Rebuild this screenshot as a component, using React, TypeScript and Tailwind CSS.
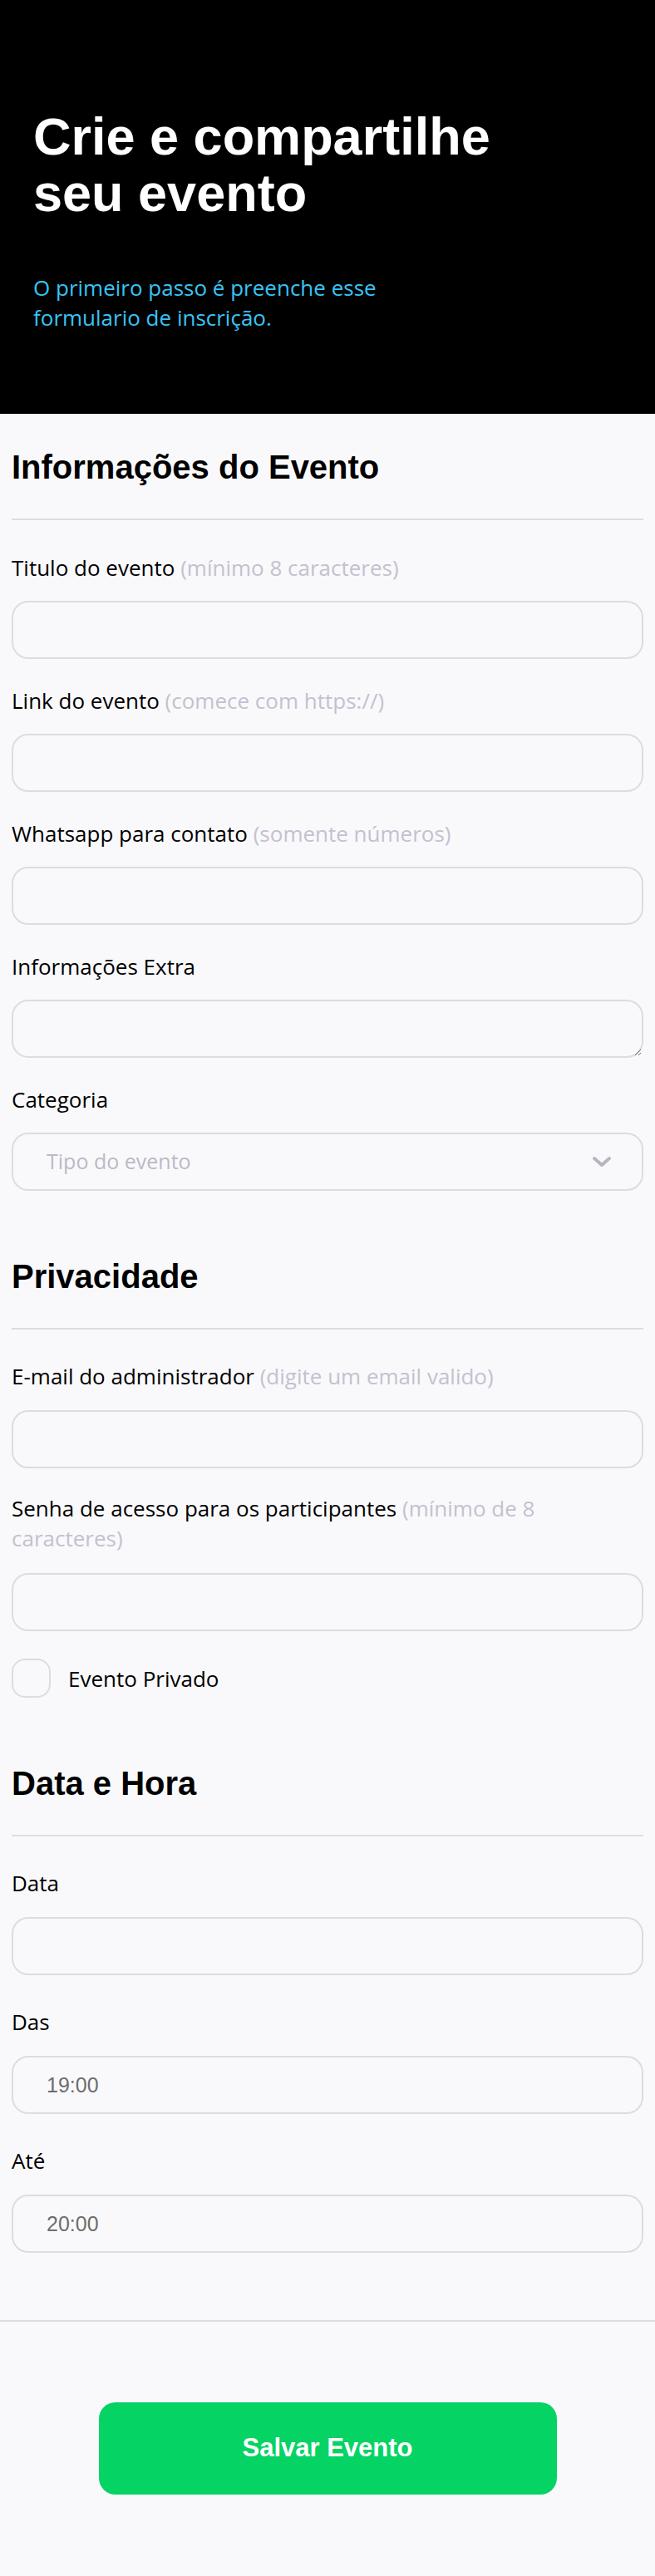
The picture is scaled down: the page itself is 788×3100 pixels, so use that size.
import React from 'react';

const body = { fontFamily: '"Open Sans", "Noto Sans", sans-serif' };
const grotesk = { fontFamily: '"Liberation Sans", Arial, sans-serif' };

type FieldProps = {
  label: string;
  hint?: string;
  children: React.ReactNode;
  labelGap?: string;
};

const Field: React.FC<FieldProps> = ({ label, hint, children, labelGap = 'mb-[22px]' }) => (
  <div className="flex flex-col">
    <label className={`text-[26px] leading-[36px] text-black ${labelGap}`}>
      {label}
      {hint && <span className="text-[#c4c1cf]"> {hint}</span>}
    </label>
    {children}
  </div>
);

const inputCls =
  'block h-[70px] w-full rounded-[20px] border-2 border-[#dddbe3] bg-transparent px-[40px] text-[25px] outline-none';

const Section: React.FC<{ title: string; top: string; children: React.ReactNode }> = ({ title, top, children }) => (
  <section className={top}>
    <h2 className="text-[40px] font-bold leading-[46px] text-black" style={grotesk}>
      {title}
    </h2>
    <div className="mt-[39px] h-[2px] bg-[#dddbe3]" />
    {children}
  </section>
);

export default function App() {
  return (
    <div className="min-h-[3100px] w-full bg-[#f9f9fb]" style={body}>
      <header className="bg-black px-[40px] pt-[130px] pb-[98px]">
        <h1 className="max-w-[600px] text-[63px] font-bold leading-[68px] text-white" style={grotesk}>
          Crie e compartilhe seu evento
        </h1>
        <p className="mt-[62px] max-w-[470px] text-[26px] leading-[36px] text-[#38c4f5]">
          O primeiro passo é preenche esse formulario de inscrição.
        </p>
      </header>

      <main className="px-[14px] pt-[41px]">
        <Section title="Informações do Evento" top="">
          <div className="mt-[39px] flex flex-col gap-[32px]">
            <Field label="Titulo do evento" hint="(mínimo 8 caracteres)">
              <input className={`${inputCls} text-black`} style={body} />
            </Field>
            <Field label="Link do evento" hint="(comece com https://)">
              <input className={`${inputCls} text-black`} style={body} />
            </Field>
            <Field label="Whatsapp para contato" hint="(somente números)">
              <input className={`${inputCls} text-black`} style={body} />
            </Field>
            <Field label="Informações Extra">
              <textarea className={`${inputCls} resize text-black`} style={body} />
            </Field>
            <Field label="Categoria">
              <div className="relative">
                <select
                  defaultValue=""
                  className={`${inputCls} appearance-none text-[#bcb9c5]`}
                  style={body}
                >
                  <option value="" disabled>
                    Tipo do evento
                  </option>
                  <option value="show">Show</option>
                  <option value="palestra">Palestra</option>
                </select>
                <svg
                  className="pointer-events-none absolute right-[38px] top-[28px]"
                  width="24"
                  height="14"
                  viewBox="0 0 24 14"
                  fill="none"
                  stroke="#b8b5c0"
                  strokeWidth="4"
                  strokeLinecap="round"
                  strokeLinejoin="round"
                >
                  <polyline points="3,3 12,11 21,3" />
                </svg>
              </div>
            </Field>
          </div>
        </Section>

        <Section title="Privacidade" top="pt-[80px]">
          <div className="mt-[38px] flex flex-col">
            <Field label="E-mail do administrador" hint="(digite um email valido)" labelGap="mb-[23px]">
              <input type="email" className={`${inputCls} text-black`} style={body} />
            </Field>
            <div className="mt-[30px]">
              <Field label="Senha de acesso para os participantes" hint="(mínimo de 8 caracteres)" labelGap="mb-[24px]">
                <input type="password" className={`${inputCls} text-black`} style={body} />
              </Field>
            </div>
            <label className="mt-[33px] flex items-center gap-[21px]">
              <input
                type="checkbox"
                className="h-[47px] w-[47px] appearance-none rounded-[16px] border-2 border-[#dddbe3] bg-transparent"
              />
              <span className="text-[26px] leading-[36px] text-black">Evento Privado</span>
            </label>
          </div>
        </Section>

        <Section title="Data e Hora" top="pt-[80px]">
          <div className="mt-[38px] flex flex-col gap-[38px]">
            <Field label="Data" labelGap="mb-[23px]">
              <input className={`${inputCls} text-black`} style={body} />
            </Field>
            <Field label="Das" labelGap="mb-[23px]">
              <input readOnly defaultValue="19:00" className={`${inputCls} text-[#6d6d6d]`} style={grotesk} />
            </Field>
            <Field label="Até" labelGap="mb-[23px]">
              <input readOnly defaultValue="20:00" className={`${inputCls} text-[#6d6d6d]`} style={grotesk} />
            </Field>
          </div>
        </Section>
      </main>

      <div className="mt-[81px] h-[2px] w-full bg-[#dddbe3]" />

      <div className="flex justify-center pt-[97px] pb-[97px]">
        <button
          type="button"
          className="h-[111px] w-[551px] rounded-[20px] bg-[#05d364] text-[31px] font-bold text-white"
          style={grotesk}
        >
          Salvar Evento
        </button>
      </div>
    </div>
  );
}
